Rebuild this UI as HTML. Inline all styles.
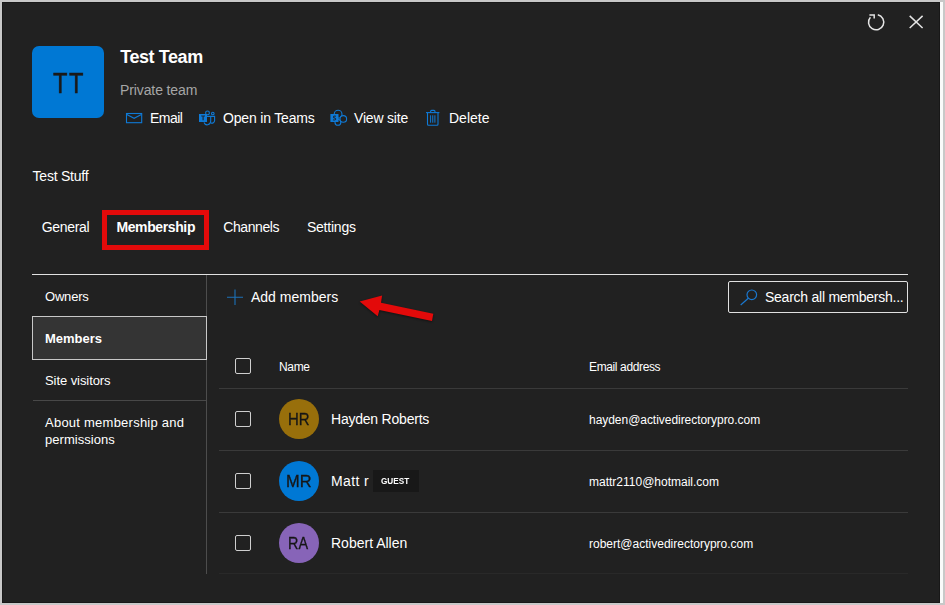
<!DOCTYPE html>
<html><head><meta charset="utf-8">
<style>
*{box-sizing:border-box;margin:0;padding:0}
html,body{width:945px;height:605px;overflow:hidden;background:#c8c8c8;font-family:"Liberation Sans",sans-serif;color:#fff}
#frame{position:absolute;left:2px;top:2px;width:938px;height:601px;background:#212121;border:1px solid #181818}
#wstrip{position:absolute;left:940px;top:2px;width:3px;height:601px;background:#fafafa}
.abs{position:absolute;white-space:nowrap}
.t14{font-size:14px;line-height:16px}
svg{position:absolute;overflow:visible}
.hl{position:absolute;height:1px;background:#3a3a3a}
.cb{position:absolute;width:16px;height:16px;border:1px solid #cfcfcf;border-radius:2px}
.av{position:absolute;width:40px;height:40px;border-radius:50%;text-align:center;font-size:17px;line-height:40px;color:#1f1f1f}
</style></head><body>
<div id="frame"></div><div id="wstrip"></div>

<!-- header -->
<div class="abs" style="left:32px;top:46px;width:72px;height:72px;background:#0078d4;border-radius:7px"></div>
<div class="abs" id="tt" style="left:52.8px;top:66.5px;font-size:28.9px;line-height:32px;letter-spacing:1.9px;color:#1a1918;-webkit-text-stroke:0.55px #1a1918;transform-origin:0 0;transform:scaleX(0.818)">TT</div>
<div class="abs" id="title" style="letter-spacing:-0.42px;left:120.2px;top:46px;font-size:18px;font-weight:bold;line-height:22px">Test Team</div>
<div class="abs t14" id="priv" style="letter-spacing:-0.11px;left:120px;top:82px;color:#a6a6a6">Private team</div>

<div class="abs t14" id="a1" style="letter-spacing:-0.55px;left:150px;top:110px">Email</div>
<div class="abs t14" id="a2" style="letter-spacing:-0.18px;left:223px;top:110px">Open in Teams</div>
<div class="abs t14" id="a3" style="letter-spacing:-0.20px;left:354px;top:110px">View site</div>
<div class="abs t14" id="a4" style="left:449px;top:110px">Delete</div>

<div class="abs t14" id="ts" style="letter-spacing:-0.24px;left:32.6px;top:168px">Test Stuff</div>

<div class="abs t14" id="tb1" style="letter-spacing:-0.32px;left:41.7px;top:219.4px">General</div>
<div class="abs t14" id="tb2" style="letter-spacing:-0.38px;left:116.4px;top:219.4px;font-weight:bold">Membership</div>
<div class="abs t14" id="tb3" style="letter-spacing:-0.41px;left:223.2px;top:219.4px">Channels</div>
<div class="abs t14" id="tb4" style="letter-spacing:-0.21px;left:306.9px;top:219.4px">Settings</div>
<div class="abs" style="left:102px;top:210px;width:107px;height:40px;border:5px solid #e30a0a"></div>

<div class="hl" style="left:32px;top:274px;width:876px;background:#e1e1e1"></div>
<div class="abs" style="left:206px;top:275px;width:1px;height:299px;background:#4d4d4d"></div>

<!-- left nav -->
<div class="abs" style="letter-spacing:-0.20px;font-size:13px;left:45px;top:289px" id="n1">Owners</div>
<div class="abs" style="left:32px;top:316px;width:175px;height:44px;background:#343434;border:1px solid #c8c8c8"></div>
<div class="abs" style="font-size:13px;left:45px;top:331px;font-weight:bold" id="n2">Members</div>
<div class="abs" style="letter-spacing:-0.07px;font-size:13px;left:45px;top:373px" id="n3">Site visitors</div>
<div class="hl" style="left:33px;top:400px;width:173px;background:#484848"></div>
<div class="abs" style="font-size:13px;left:45px;top:415px;letter-spacing:0.24px" id="n4">About membership and</div>
<div class="abs" style="font-size:13px;left:45px;top:432px;letter-spacing:0.05px" id="n5">permissions</div>

<!-- toolbar -->
<div class="abs t14" id="add" style="left:251px;top:289px">Add members</div>
<div class="abs" style="left:728px;top:281px;width:180px;height:32px;border:1px solid #e1e1e1;border-radius:2px"></div>
<div class="abs t14" id="srch" style="letter-spacing:-0.25px;left:765px;top:289px">Search all membersh...</div>

<!-- table -->
<div class="cb" style="left:235px;top:358px"></div>
<div class="abs" style="letter-spacing:-0.33px;font-size:12px;left:279px;top:360px" id="hn">Name</div>
<div class="abs" style="letter-spacing:-0.37px;font-size:12px;left:589px;top:360px" id="he">Email address</div>
<div class="hl" style="left:219px;top:388px;width:689px"></div>
<div class="hl" style="left:219px;top:450px;width:689px"></div>
<div class="hl" style="left:219px;top:512px;width:689px"></div>
<div class="hl" style="left:219px;top:573px;width:689px;background:#292929"></div>

<div class="cb" style="left:235px;top:411px"></div>
<div class="av" style="left:279px;top:399px;background:#986f0b"></div>
<div class="abs" id="av1" style="left:288.0px;top:411.3px;transform-origin:0 0;transform:scaleX(0.936);font-size:16px;line-height:18px;color:#161616;-webkit-text-stroke:0.3px #161616">HR</div>
<div class="abs t14" id="r1" style="letter-spacing:-0.22px;left:331px;top:411px">Hayden Roberts</div>
<div class="abs" style="letter-spacing:-0.04px;font-size:12px;left:589px;top:413px" id="e1">hayden@activedirectorypro.com</div>

<div class="cb" style="left:235px;top:473px"></div>
<div class="av" style="left:279px;top:461px;background:#0078d4"></div>
<div class="abs" id="av2" style="left:286.2px;top:473.3px;transform-origin:0 0;transform:scaleX(1.026);font-size:16px;line-height:18px;color:#161616;-webkit-text-stroke:0.3px #161616">MR</div>
<div class="abs t14" id="r2" style="letter-spacing:0.36px;left:331px;top:473px">Matt r</div>
<div class="abs" style="left:373px;top:470px;width:46px;height:22px;background:#181818"></div>
<div class="abs" id="guest" style="left:381.2px;top:475px;font-size:9.5px;font-weight:bold;line-height:12px;transform-origin:0 0;transform:scaleX(0.86)">GUEST</div>
<div class="abs" style="font-size:12px;left:589px;top:475px" id="e2">mattr2110@hotmail.com</div>

<div class="cb" style="left:235px;top:535px"></div>
<div class="av" style="left:279px;top:523px;background:#8764b8"></div>
<div class="abs" id="av3" style="left:288.0px;top:535.4px;transform-origin:0 0;transform:scaleX(0.9);font-size:16px;line-height:18px;color:#161616;-webkit-text-stroke:0.3px #161616">RA</div>
<div class="abs t14" id="r3" style="left:331px;top:535px">Robert Allen</div>
<div class="abs" style="font-size:12px;left:589px;top:537px" id="e3">robert@activedirectorypro.com</div>


<svg id="icons" width="945" height="605" viewBox="0 0 945 605" style="left:0;top:0" fill="none" stroke-linecap="butt">
<!-- refresh -->
<g stroke="#e4e4e4" stroke-width="1.5">
<path d="M877.8 14.8 A7.6 7.6 0 1 1 870.4 17.2"/>
<path d="M869.4 14.9 H874.2 V18.4"/>
</g>
<!-- close -->
<path d="M909.7 15.9 L922.6 28 M922.6 15.9 L909.7 28" stroke="#e4e4e4" stroke-width="1.5"/>
<!-- email -->
<g stroke="#0f7ad6" stroke-width="1.1">
<rect x="126.5" y="113.5" width="15.2" height="9.2"/>
<path d="M126.8 114.6 L134.1 118.3 L141.4 114.6"/>
</g>
<!-- teams -->
<g stroke="#0f7ad6" stroke-width="1.1">
<circle cx="207.5" cy="112.9" r="1.9"/>
<circle cx="212.8" cy="113.5" r="1.3"/>
<path d="M207 116.4 H210.7 V121.3 A3.5 3.9 0 0 1 204 122.5"/>
<path d="M210.8 116.4 H214.6 V120.6 A2.6 2.6 0 0 1 210.9 122.9"/>
<rect x="199" y="114" width="8" height="8" fill="#0f7ad6" stroke="none"/>
<path d="M201.2 116 H205 M203.1 116 V120.3" stroke="#1b2a3a" stroke-width="1.2"/>
</g>
<!-- sharepoint -->
<g stroke="#0f7ad6" stroke-width="1.1">
<circle cx="338.1" cy="114.2" r="3.9"/>
<circle cx="337.9" cy="122.4" r="2.9"/>
<circle cx="343.3" cy="118.9" r="3.3" fill="#212121"/>
<rect x="330.4" y="114" width="8.1" height="8" fill="#0f7ad6" stroke="none"/>
<path d="M336 116.3 C333.5 115.4 332.6 117.4 334.6 118 C336.6 118.7 335.6 120.6 333 119.7" stroke="#1b2a3a" stroke-width="1.1"/>
</g>
<!-- trash -->
<g stroke="#0f7ad6" stroke-width="1.1">
<path d="M426 112.6 H439.4"/>
<path d="M430.6 112.6 V111.4 Q430.6 110.4 431.6 110.4 H434 Q435 110.4 435 111.4 V112.6"/>
<path d="M427.5 112.8 V124.2 Q427.5 125.2 428.5 125.2 H437 Q438 125.2 438 124.2 V112.8"/>
<path d="M430.6 115.3 V122.7 M432.75 115.3 V122.7 M434.9 115.3 V122.7" stroke-width="1"/>
</g>
<!-- plus -->
<path d="M235 289.5 V305 M227 297.3 H243" stroke="#1c72b8" stroke-width="1.1"/>
<!-- search -->
<g stroke="#1a78d0" stroke-width="1.2">
<circle cx="751.8" cy="294.8" r="4.8"/>
<path d="M748.3 298.3 L740.7 305"/>
</g>
<!-- arrow -->
<polygon points="359.7,301.4 382.1,295.6 381,302.8 433.3,313.8 432,321 379.4,310.1 377.7,316.2" fill="#e30a0a" stroke="none" style="filter:drop-shadow(0.5px 1px 1px rgba(0,0,0,.45))"/>
</svg>
</body></html>
